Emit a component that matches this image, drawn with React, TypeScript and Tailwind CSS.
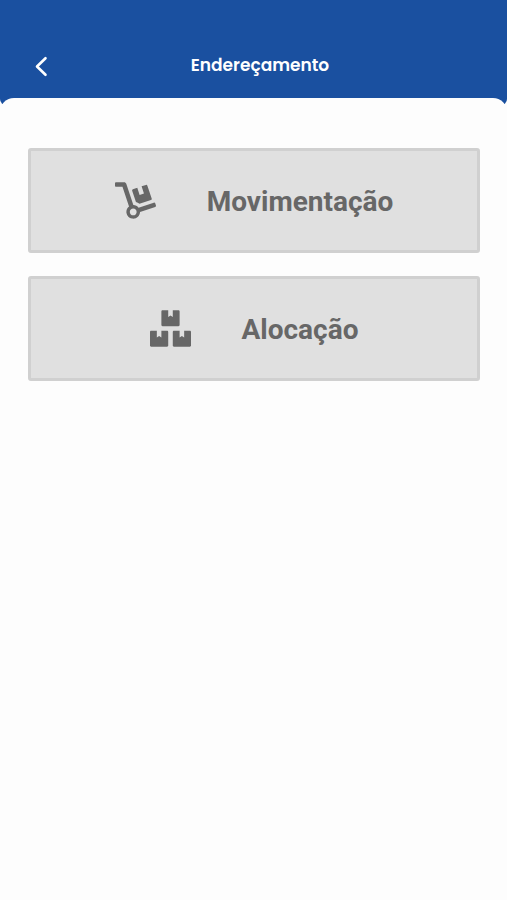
import type { ReactNode } from "react";
import { FaBoxes, FaDolly } from "react-icons/fa";

function MenuButton({ icon, label }: { icon: ReactNode; label: string }) {
  return (
    <button className="flex h-[105px] w-full items-center justify-center gap-[51px] rounded-[3px] border-[3px] border-[#d0d0d0] bg-[#e0e0e0] text-[#676767]">
      {icon}
      <span className="pt-[2px] font-['Roboto',sans-serif] text-[28px] leading-8 font-bold">
        {label}
      </span>
    </button>
  );
}

export default function App() {
  return (
    <div className="flex min-h-[900px] w-full flex-col bg-[#fdfdfd]">
      <header className="flex h-[105px] items-start rounded-b-[6px] bg-[#1a50a0] pt-[53px] text-white">
        <button className="ml-[34px] flex h-[26px] w-4 items-center" aria-label="Voltar">
          <svg
            width="14"
            height="22"
            viewBox="0 0 14 22"
            fill="none"
            stroke="currentColor"
            strokeWidth="2.6"
            strokeLinecap="round"
            strokeLinejoin="round"
          >
            <path d="M11.5 3.2 3 11.5l8.5 8.3" />
          </svg>
        </button>
        <h1 className="mr-[37px] flex-1 text-center font-['Poppins','Inter',sans-serif] text-[17px] leading-6 font-semibold">
          Endereçamento
        </h1>
      </header>
      <main className="relative -mt-[7px] flex flex-1 flex-col gap-[23px] rounded-t-[14px] bg-[#fdfdfd] pt-[50px] pr-[27px] pl-7">
        <MenuButton icon={<FaDolly size={41} />} label="Movimentação" />
        <MenuButton icon={<FaBoxes size={41} />} label="Alocação" />
      </main>
    </div>
  );
}
